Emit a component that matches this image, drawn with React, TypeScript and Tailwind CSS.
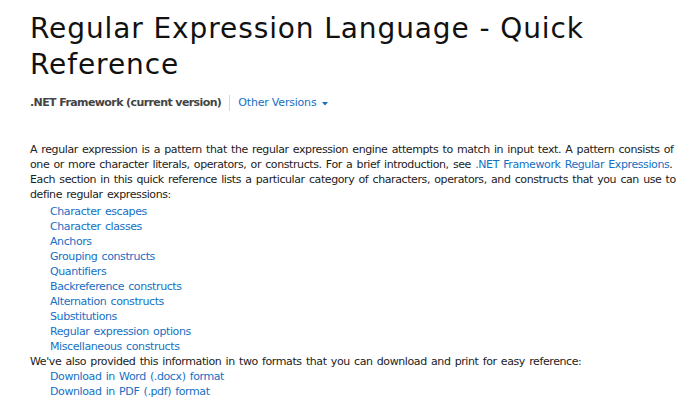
const LINKS = [
  "Character escapes",
  "Character classes",
  "Anchors",
  "Grouping constructs",
  "Quantifiers",
  "Backreference constructs",
  "Alternation constructs",
  "Substitutions",
  "Regular expression options",
  "Miscellaneous constructs",
];

const DOWNLOADS = ["Download in Word (.docx) format", "Download in PDF (.pdf) format"];

export default function App() {
  return (
    <div className="h-[410px] w-[700px] overflow-hidden bg-white pr-[8px] pl-[30px] font-['DejaVu_Sans',sans-serif] text-[#222]">
      <h1 className="pt-[11px] text-[28px] leading-[36px] font-normal tracking-[0.9px] text-[#111]">
        Regular Expression Language - Quick
        <br />
        Reference
      </h1>

      <div className="mt-[12px] flex items-center text-[11px] leading-[16px]">
        <span className="font-bold tracking-[-0.6px] text-[#444]">.NET Framework (current version)</span>
        <span className="mx-[8px] h-[16px] w-px bg-[#d8d8d8]" />
        <a className="flex items-center gap-[6px] tracking-[-0.2px] text-[#1570c4]" href="#">
          Other Versions
          <svg width="6" height="4" viewBox="0 0 6 4" className="mt-[2px]">
            <path d="M0 0h6L3 3.5z" fill="#1570c4" />
          </svg>
        </a>
      </div>

      <div className="mt-[31px] text-[11px] leading-[15px] tracking-[-0.4px] whitespace-nowrap [word-spacing:1.1px]">
        <p>
          A regular expression is a pattern that the regular expression engine attempts to match in input text. A pattern consists of
          <br />
          one or more character literals, operators, or constructs. For a brief introduction, see{" "}
          <a className="text-[#1570c4]" href="#">
            .NET Framework Regular Expressions
          </a>
          .
          <br />
          Each section in this quick reference lists a particular category of characters, operators, and constructs that you can use to
          <br />
          define regular expressions:
        </p>
        <ul className="mt-[2px] pl-[20px]">
          {LINKS.map((l) => (
            <li key={l}>
              <a className="text-[#1570c4]" href="#">
                {l}
              </a>
            </li>
          ))}
        </ul>
        <p>We've also provided this information in two formats that you can download and print for easy reference:</p>
        <ul className="pl-[20px]">
          {DOWNLOADS.map((l) => (
            <li key={l}>
              <a className="text-[#1570c4]" href="#">
                {l}
              </a>
            </li>
          ))}
        </ul>
      </div>
    </div>
  );
}
